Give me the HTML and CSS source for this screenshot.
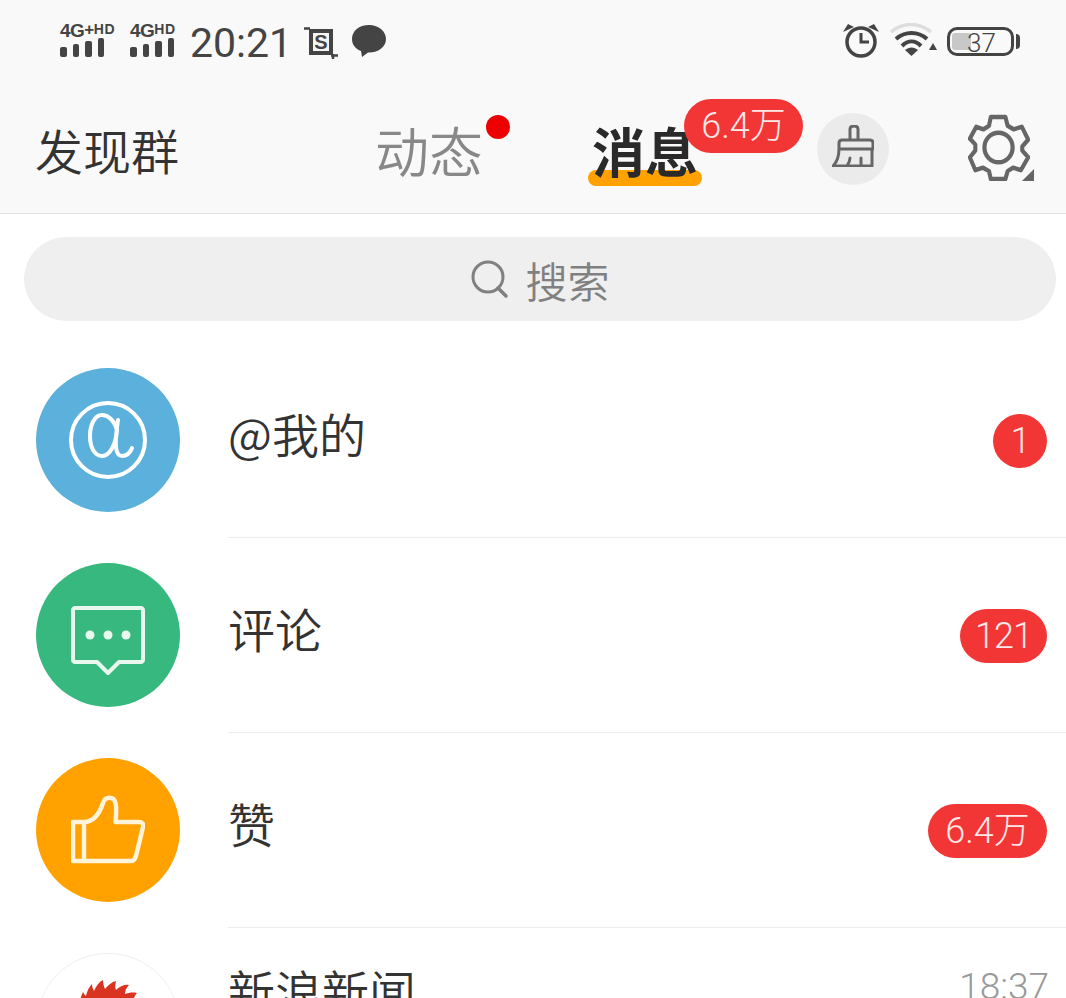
FILE: index.html
```html
<!DOCTYPE html>
<html lang="zh-CN">
<head>
    <meta charset="UTF-8">
    <meta name="viewport" content="width=device-width, initial-scale=1.0">
    <title>消息</title>
    <link rel="stylesheet" href="styles.css">
</head>
<body>

    <header class="topBar">
        <!-- Status bar -->
        <div class="statusBar">
            <div class="statusLeft">
                <div class="signal signalFirst">
                    <div class="signalLabel">4G<b>+</b><small>HD</small></div>
                    <div class="signalBars"><i class="h1"></i><i class="h2"></i><i class="h3"></i><i class="h4"></i></div>
                </div>
                <div class="signal">
                    <div class="signalLabel">4G<small>HD</small></div>
                    <div class="signalBars"><i class="h1"></i><i class="h2"></i><i class="h3"></i><i class="h4"></i></div>
                </div>
                <span class="clock">20:21</span>
                <svg class="cropIcon" width="34" height="34" viewBox="0 0 34 34">
                    <rect x="5" y="4" width="24" height="26" fill="#444"/>
                    <rect x="9" y="8" width="16" height="18" fill="#f4f4f4"/>
                    <path d="M0 3.500H6M29 29V34M27 30.500H34" stroke="#444" stroke-width="2.500"/>
                    <text x="17" y="23.500" text-anchor="middle" class="cropLetter">S</text>
                </svg>
                <svg class="chatIcon" width="36" height="34" viewBox="0 0 36 34">
                    <path d="M18 1C8 1 1 7 1 15c0 6 4 10 9 12l1 6 6-4.500h1c10 0 17-6 17-13.500S28 1 18 1z" fill="#444"/>
                </svg>
            </div>
            <div class="statusRight">
                <svg class="alarmIcon" width="38" height="36" viewBox="0 0 38 36">
                    <circle cx="19" cy="19" r="14" fill="none" stroke="#444" stroke-width="3.500"/>
                    <path d="M19 10V19H27" fill="none" stroke="#444" stroke-width="3"/>
                    <path d="M1 9L6 1L12 4ZM37 9L32 1L26 4Z" fill="#444"/>
                </svg>
                <svg class="wifiIcon" width="48" height="36" viewBox="0 0 48 36">
                    <path d="M2 9C14 -1 30 -1 42 9" fill="none" stroke="#ddd" stroke-width="3.500"/>
                    <path d="M7 16C16 8 29 8 38 16" fill="none" stroke="#444" stroke-width="4"/>
                    <path d="M13 23C19 17 26 17 32 23" fill="none" stroke="#444" stroke-width="4"/>
                    <path d="M16 27C20 23.500 25 23.500 29 27L22.500 33Z" fill="#444"/>
                    <path d="M40 27L44 20L48 27Z" fill="#444"/>
                </svg>
                <div class="battery">
                    <div class="batteryFill"></div>
                    <span class="batteryText">37</span>
                </div>
                <div class="batteryTip"></div>
            </div>
        </div>

        <!-- Tabs -->
        <nav class="tabBar">
            <a class="tabFind">发现群</a>
            <a class="tab tabFeed">动态<span class="redDot"></span></a>
            <a class="tab tabActive">消息<span class="tabLine"></span><span class="badge badgeWide tabBadge">6.4万</span></a>
            <span class="broom">
                <svg width="42" height="42" viewBox="0 0 42 42">
                    <path d="M18 15V4C18 0 26 0 26 4V15" fill="none" stroke="#666" stroke-width="3"/>
                    <path d="M7 24V18C7 16 8 15 10 15H38C40 15 41 16 41 18V24ZM7 24C7 32 5 37 1 41H40V24M15 41C17 38 18 36 18 33M29 41V33" fill="none" stroke="#666" stroke-width="3" stroke-linejoin="round" stroke-linecap="round"/>
                </svg>
            </span>
            <span class="gear">
                <svg width="62" height="67" viewBox="0 0 66 68" preserveAspectRatio="none">
                    <path d="M24 3H40L42.500 12L49 15.500L58 13L65 26L58.500 33L58.500 37L65 44L57 57L48.500 54.500L42.500 58L40 66H24L22 58L15.500 54.500L7 57L1 44L7 37V31L1 25L8 13L16 15.500L22 12Z" transform="translate(1 0) scale(.97 1)" fill="none" stroke="#666" stroke-width="4.500" stroke-linejoin="round"/>
                    <circle cx="32.500" cy="34" r="15" fill="none" stroke="#666" stroke-width="4.500"/>
                </svg>
                <span class="gearCorner"></span>
            </span>
        </nav>
    </header>

    <section class="searchWrap">
        <div class="searchBox">
            <svg width="40" height="40" viewBox="0 0 40 40">
                <circle cx="18" cy="18" r="15" fill="none" stroke="#808080" stroke-width="3"/>
                <path d="M28 29L36 37" stroke="#808080" stroke-width="3.500" stroke-linecap="round"/>
            </svg>
            <span>搜索</span>
        </div>
    </section>

    <ul class="msgList">
        <li class="msgRow">
            <div class="avatar avatarBlue">
                <svg width="80" height="80" viewBox="0 0 80 80">
                    <circle cx="40" cy="40" r="37" fill="none" stroke="#fff" stroke-width="4"/>
                    <path d="M50 20C47 40 46 56 54 56C58 56 62 53 64 48M49 30C46 20 40 15 34 15C26 15 22 26 22 36C22 48 27 56 34 56C42 56 48 44 49 30Z" fill="none" stroke="#fff" stroke-width="4" stroke-linecap="round"/>
                </svg>
            </div>
            <div class="msgBody">
                <span class="msgTitle">@我的</span>
                <span class="badge">1</span>
            </div>
        </li>
        <li class="msgRow">
            <div class="avatar avatarGreen">
                <svg class="commentIcon" width="74" height="70" viewBox="0 0 74 70">
                    <path d="M4 2H70C71 2 72 3 72 4V54C72 55 71 56 70 56H48L37 67L26 56H4C3 56 2 55 2 54V4C2 3 3 2 4 2Z" fill="none" stroke="#e8f8ef" stroke-width="4" stroke-linejoin="round"/>
                    <circle cx="19" cy="29" r="4.500" fill="#e8f8ef"/>
                    <circle cx="37" cy="29" r="4.500" fill="#e8f8ef"/>
                    <circle cx="55" cy="29" r="4.500" fill="#e8f8ef"/>
                </svg>
            </div>
            <div class="msgBody">
                <span class="msgTitle">评论</span>
                <span class="badge">121</span>
            </div>
        </li>
        <li class="msgRow">
            <div class="avatar avatarOrange">
                <svg width="74" height="70" viewBox="0 0 74 70">
                    <path d="M2 27H13V66H2ZM13 27C22 27 28 20 32 8C34 1 43 1 44.500 8C46 14 45 20 44.500 27H68C71 27 73 29 72 32L65 61C64 64 63 66 60 66H13" fill="none" stroke="#fff3d9" stroke-width="4.500" stroke-linejoin="round"/>
                </svg>
            </div>
            <div class="msgBody">
                <span class="msgTitle">赞</span>
                <span class="badge badgeWide">6.4万</span>
            </div>
        </li>
        <li class="msgRow">
            <div class="avatar avatarSina">
                <svg width="58" height="30" viewBox="0 0 58 30">
                    <path d="M0 30C0 22 2 16 4 12C5 14 6 15 7 16C8 11 10 7 13 4C13 7 14 9 15 11C17 6 20 2 24 0C24 4 25 7 26 9C29 5 33 2 37 1C36 5 36 8 37 10C41 6 46 4 50 5C47 8 46 11 46 14C49 13 53 12 58 13C54 17 53 24 52 30Z" fill="#d9341f"/>
                </svg>
            </div>
            <div class="msgBody msgBodyNews">
                <span class="msgTitle">新浪新闻</span>
                <span class="msgTime">18:37</span>
            </div>
        </li>
    </ul>

</body>
</html>
```

FILE: styles.css
```css
html, body {
    height: 998px;
    overflow: hidden;
}

body {
    font-family: "Noto Sans CJK SC", "Noto Sans", sans-serif;
    margin: 0;
    padding: 0;
    background-color: #fff;
    color: #333;
}

.topBar {
    height: 214px;
    box-sizing: border-box;
    background-color: #f9f9f9;
    border-bottom: 1px solid #e3e3e3;
}

/* Status bar */
.statusBar {
    height: 86px;
    display: flex;
    justify-content: space-between;
    align-items: center;
    padding: 0 46px 0 60px;
}

.statusLeft, .statusRight {
    display: flex;
    align-items: center;
}

.signal {
    width: 58px;
    margin-right: 2px;
    margin-bottom: 8px;
    color: #444;
}

.signalFirst {
    margin-right: 12px;
}

.signalLabel {
    font-family: "Liberation Sans", sans-serif;
    font-size: 19px;
    font-weight: 700;
    line-height: 16px;
    white-space: nowrap;
    letter-spacing: -0.5px;
}

.signalLabel b {
    font-size: 17px;
    vertical-align: 2px;
}

.signalLabel small {
    font-size: 14px;
    vertical-align: 3px;
    letter-spacing: 0.5px;
}

.signalBars {
    display: flex;
    align-items: flex-end;
    gap: 6px;
    height: 19px;
    margin-top: -1px;
}

.signalBars i {
    display: block;
    width: 6.500px;
    border-radius: 2px;
    background-color: #444;
}

.signalBars .h1 { height: 10px; }
.signalBars .h2 { height: 13px; }
.signalBars .h3 { height: 16px; }
.signalBars .h4 { height: 19px; }

.clock {
    font-family: Roboto, "Liberation Sans", sans-serif;
    font-size: 41px;
    font-weight: 400;
    color: #444;
    margin-right: 12px;
    line-height: 1;
}

.cropIcon {
    margin-right: 13px;
    margin-bottom: 3px;
}

.cropLetter {
    font-family: "Liberation Sans", sans-serif;
    font-size: 20px;
    font-weight: 700;
    fill: #444;
}

.chatIcon {
    margin-bottom: 4px;
}

.alarmIcon {
    margin-bottom: 4px;
}

.wifiIcon {
    margin-left: 9px;
    margin-bottom: 4px;
}

.battery {
    position: relative;
    width: 61px;
    height: 23px;
    margin-left: 10px;
    margin-bottom: 4px;
    border: 3px solid #444;
    border-radius: 10px;
}

.batteryFill {
    width: 19px;
    height: 17px;
    margin: 3px 0 0 2px;
    background-color: #c8c8c8;
    border-radius: 3px;
}

.batteryText {
    position: absolute;
    left: 17px;
    top: 2px;
    font-family: Roboto, "Liberation Sans", sans-serif;
    font-size: 26px;
    font-weight: 300;
    line-height: 23px;
    color: #444;
}

.batteryTip {
    width: 4px;
    height: 15px;
    margin-left: 2px;
    margin-bottom: 4px;
    background-color: #444;
    border-radius: 0 4px 4px 0;
}

/* Tabs */
.tabBar {
    position: relative;
    height: 127px;
    display: flex;
    align-items: center;
    padding: 0 36px 0 35px;
}

.tabFind {
    font-size: 48px;
    font-weight: 350;
    line-height: 60px;
    color: #333;
    margin-top: -1px;
    width: 340px;
}

.tab {
    position: relative;
    font-size: 54px;
    font-weight: 350;
    line-height: 66px;
    white-space: nowrap;
    color: #888;
}

.tabFeed {
    margin-right: 109px;
}

.tabActive {
    z-index: 0;
    font-size: 53px;
    color: #2a2a2a;
    font-weight: 700;
}

.redDot {
    position: absolute;
    left: 111px;
    top: -2px;
    width: 24px;
    height: 24px;
    border-radius: 50%;
    background-color: #ee0000;
}

.tabLine {
    position: absolute;
    z-index: -1;
    left: -4px;
    top: 53px;
    width: 114px;
    height: 16px;
    border-radius: 8px;
    background-color: #ffa200;
}

.badge {
    flex: none;
    min-width: 54px;
    height: 54px;
    box-sizing: border-box;
    padding: 0 15px;
    border-radius: 27px;
    background-color: #f23636;
    color: #fde8e8;
    font-family: Roboto, "Noto Sans CJK SC", sans-serif;
    font-size: 36px;
    font-weight: 300;
    line-height: 54px;
    text-align: center;
    white-space: nowrap;
    letter-spacing: -1px;
}

.msgBody .badge {
    margin-top: 12px;
}

.badgeWide {
    width: 119px;
    padding: 0;
    letter-spacing: 0;
}

.tabBadge {
    position: absolute;
    z-index: 1;
    left: 92px;
    top: -18px;
}

.broom {
    width: 72px;
    height: 72px;
    margin-left: 119px;
    margin-top: -2px;
    border-radius: 50%;
    background-color: #ebebeb;
    display: flex;
    align-items: center;
    justify-content: center;
}

.broom svg {
    margin-bottom: 5px;
}

.gear {
    position: relative;
    margin-left: auto;
    margin-top: -4px;
    height: 67px;
}

.gearCorner {
    position: absolute;
    right: -4px;
    bottom: 0;
    width: 0;
    height: 0;
    border-left: 12px solid transparent;
    border-bottom: 12px solid #666;
}

/* Search */
.searchWrap {
    padding: 23px 10px 0 24px;
}

.searchBox {
    height: 84px;
    border-radius: 42px;
    background-color: #efefef;
    display: flex;
    align-items: center;
    justify-content: center;
    gap: 15px;
    color: #808080;
    font-size: 42px;
    font-weight: 350;
}

/* Message list */
.msgList {
    list-style: none;
    margin: 0;
    padding: 22px 0 0 0;
}

.msgRow {
    height: 195px;
    display: flex;
    padding-left: 36px;
}

.avatar {
    flex: none;
    width: 144px;
    height: 144px;
    margin-top: 25px;
    box-sizing: border-box;
    border-radius: 50%;
    display: flex;
    align-items: center;
    justify-content: center;
}

.avatarBlue { background-color: #5cb1dc; }
.avatarGreen { background-color: #36b87f; }
.avatarOrange { background-color: #ffa200; }

.commentIcon {
    margin-top: 12px;
}

.avatarSina {
    background-color: #fff;
    border: 1px solid #f0f0f0;
    align-items: flex-start;
    padding-top: 26px;
}

.msgBody {
    flex: 1;
    margin-left: 48px;
    padding: 0 19px 10px 0;
    border-bottom: 1px solid #ececec;
    display: flex;
    justify-content: space-between;
    align-items: center;
    box-sizing: border-box;
    height: 195px;
}

.msgBodyNews {
    align-items: flex-start;
    border-bottom: none;
    padding-top: 36px;
    padding-right: 17px;
}

.msgTitle {
    font-size: 47px;
    font-weight: 350;
    line-height: 60px;
    color: #333;
    margin-top: -4px;
}

.msgTime {
    font-family: Roboto, "Liberation Sans", sans-serif;
    font-size: 37px;
    font-weight: 300;
    color: #999;
    line-height: 40px;
    margin-top: 3px;
}
```
